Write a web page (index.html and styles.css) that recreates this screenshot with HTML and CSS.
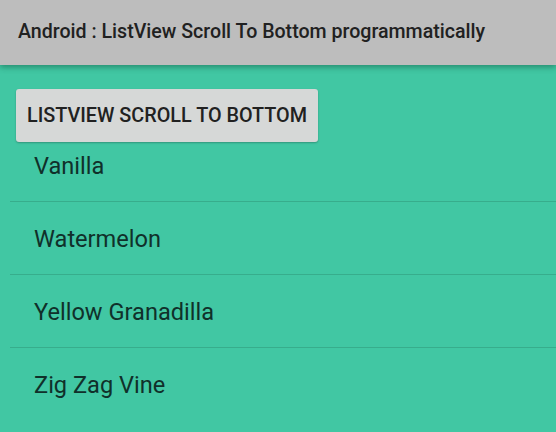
FILE: index.html
```html
<!DOCTYPE html>
<html lang="en">
<head>
    <meta charset="UTF-8">
    <meta name="viewport" content="width=device-width, initial-scale=1.0">
    <title>ListView Scroll To Bottom</title>
    <link rel="stylesheet" href="styles.css">
</head>
<body>
    <div class="toolbar">
        <h1 class="title">Android : ListView Scroll To Bottom programmatically</h1>
    </div>

    <div class="content">
        <button class="scroll-btn" type="button">LISTVIEW SCROLL TO BOTTOM</button>

        <!-- list is already scrolled down, first row sits under the button -->
        <ul class="fruit-list">
            <li>Vanilla</li>
            <li>Watermelon</li>
            <li>Yellow Granadilla</li>
            <li>Zig Zag Vine</li>
        </ul>
    </div>
</body>
</html>
```

FILE: styles.css
```css
html, body {
    margin: 0;
    height: 100%;
}

body {
    font-family: Roboto, "Liberation Sans", sans-serif;
    background-color: #41c7a3;
    overflow: hidden;
}

.toolbar {
    position: relative;
    z-index: 2;
    height: 63px;
    padding-bottom: 2px;
    background-color: #bdbdbd;
    display: flex;
    align-items: center;
    padding-left: 18px;
    box-shadow: 0 2px 6px rgba(0, 60, 40, 0.45);
}

.title {
    margin: 0;
    font-size: 19.6px;
    font-weight: 500;
    color: #212121;
}

.content {
    padding: 24px 0 0 10px;
}

.scroll-btn {
    position: relative;
    z-index: 1;
    display: block;
    margin-left: 6px;
    height: 53px;
    padding: 0 11px;
    background-color: #d6d8d7;
    border: none;
    border-radius: 3px;
    box-shadow: 0 1px 2px rgba(0, 0, 0, 0.25);
    font-family: inherit;
    font-size: 19.8px;
    font-weight: 500;
    color: #212121;
}

.fruit-list {
    list-style: none;
    margin: -13px 0 0 0;
    padding: 0;
}

.fruit-list li {
    height: 72px;
    line-height: 74px;
    padding-left: 24px;
    border-bottom: 1px solid #37ad8c;
    font-size: 23.6px;
    color: #10302a;
}

.fruit-list li:last-child {
    border-bottom: none;
}
```
